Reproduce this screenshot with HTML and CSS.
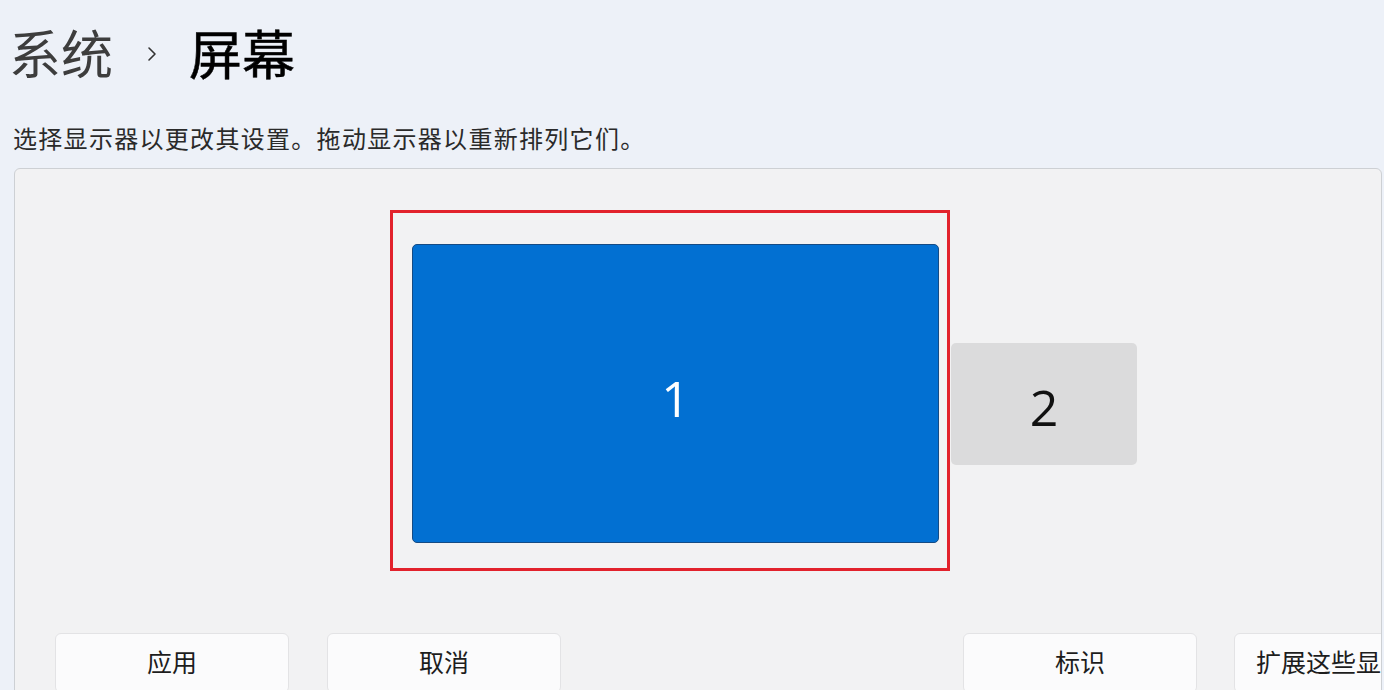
FILE: index.html
```html
<!DOCTYPE html>
<html lang="zh-CN">
<head>
<meta charset="utf-8">
<title>屏幕</title>
<link rel="stylesheet" href="styles.css">
</head>
<body>
<div class="page">
  <header class="crumbs">
    <span class="crumb-parent">系统</span>
    <svg class="chev" width="12" height="18" viewBox="0 0 12 18"><path d="M3 3 L9 9 L3 15" fill="none" stroke="#333" stroke-width="1.6" stroke-linecap="round" stroke-linejoin="round"/></svg>
    <span class="crumb-current">屏幕</span>
  </header>
  <p class="hint">选择显示器以更改其设置。拖动显示器以重新排列它们。</p>
  <section class="panel">
    <div class="arrange">
      <div class="selected">
        <div class="mon mon-1">1</div>
      </div>
      <div class="mon mon-2">2</div>
    </div>
    <div class="actions">
      <div class="group">
        <button class="btn">应用</button>
        <button class="btn">取消</button>
      </div>
      <div class="group group-right">
        <button class="btn">标识</button>
        <button class="btn btn-cut">扩展这些显示器</button>
      </div>
    </div>
  </section>
</div>
</body>
</html>
```

FILE: styles.css
```css
html, body {
  margin: 0;
  padding: 0;
  height: 100%;
  overflow: hidden;
}
body {
  background: #edf1f8;
  font-family: "Noto Sans CJK SC", "Noto Sans", sans-serif;
  color: #1b1b1b;
}
.page {
  width: 1384px;
  height: 690px;
  overflow: hidden;
}
.crumbs {
  display: flex;
  align-items: center;
  height: 56px;
  padding: 24px 0 0 9px;
}
.crumb-parent {
  font-size: 52px;
  line-height: 56px;
  color: #3d3d3d;
  font-weight: 400;
}
.chev {
  margin: 4px 0 0 33px;
}
.crumb-current {
  font-size: 53px;
  line-height: 56px;
  font-weight: 400;
  color: #000000;
  margin-left: 31px;
  -webkit-text-stroke: 0.5px #000;
}
.hint {
  margin: 42px 0 0 13px;
  font-size: 24px;
  letter-spacing: 1.3px;
  line-height: 32px;
  color: #2a2a2a;
  height: 32px;
  white-space: nowrap;
}
.panel {
  margin: 14px 0 0 14px;
  width: 1368px;
  height: 560px;
  background: #f2f2f3;
  border: 1px solid #cdd0d4;
  border-radius: 6px;
  box-sizing: border-box;
  overflow: hidden;
}
.arrange {
  display: flex;
  align-items: flex-start;
  padding: 41px 0 0 375px;
}
.selected {
  width: 560px;
  height: 361px;
  box-sizing: border-box;
  border: 3px solid #e2222c;
  padding: 31px 0 0 19px;
}
.mon {
  display: flex;
  align-items: center;
  justify-content: center;
  font-family: "Open Sans", "Noto Sans", sans-serif;
  font-size: 50px;
  border-radius: 5px;
  box-sizing: border-box;
}
.mon-1 {
  width: 527px;
  height: 299px;
  background: #0270d2;
  border: 1px solid #154b84;
  color: #ffffff;
  padding-top: 8px;
}
.mon-2 {
  width: 186px;
  height: 122px;
  margin-top: 133px;
  margin-left: 1px;
  background: #dbdbdc;
  color: #111;
  padding-top: 6px;
}
.actions {
  display: flex;
  padding: 62px 0 0 40px;
}
.group {
  display: flex;
  gap: 38px;
  flex-shrink: 0;
}
.group-right {
  margin-left: 402px;
  gap: 37px;
}
.btn {
  flex-shrink: 0;
  width: 234px;
  height: 60px;
  background: #fbfbfc;
  border: 1px solid #e3e3e5;
  border-radius: 6px;
  font-family: "Noto Sans CJK SC", sans-serif;
  font-size: 25px;
  color: #1d1d1d;
  padding: 0 0 4px 0;
}
.btn-cut {
  width: auto;
  padding: 0 22px 4px 21px;
  white-space: nowrap;
  text-align: left;
}
```
